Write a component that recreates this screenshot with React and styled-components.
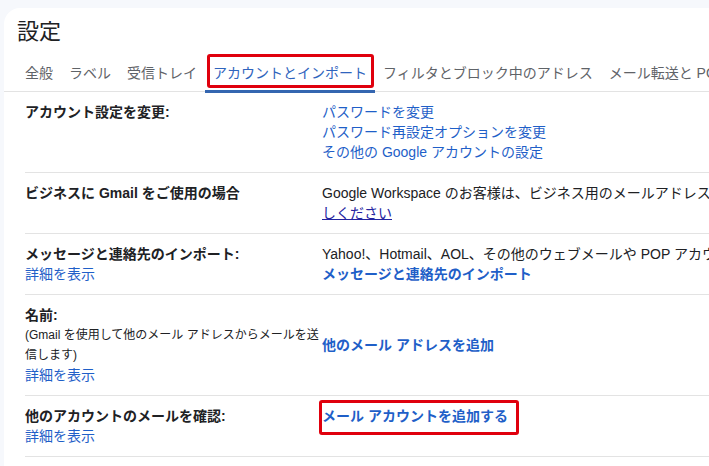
import React from "react";
import styled, { createGlobalStyle } from "styled-components";

const GlobalStyle = createGlobalStyle`
  html, body {
    margin: 0;
    padding: 0;
    overflow: hidden;
    background: #f6f8fc;
  }
  body {
    font-family: "Liberation Sans", "Noto Sans CJK JP", sans-serif;
    color: #202124;
  }
`;

// Fondo gris y panel blanco
const Page = styled.div`
  padding: 8px 0 0 4px;
  height: 466px;
  box-sizing: border-box;
`;

const Panel = styled.div`
  background: #fff;
  border-top-left-radius: 16px;
  height: 100%;
  width: 1100px;
  overflow: hidden;
`;

const Title = styled.h1`
  margin: 0;
  padding: 10px 0 0 13px;
  font-size: 22px;
  font-weight: 400;
  line-height: 28px;
  color: #202124;
`;

// Pestañas
const TabBar = styled.div`
  display: flex;
  margin-top: 9px;
  padding-left: 13px;
  border-bottom: 1px solid #e3e3e3;
  white-space: nowrap;
`;

const Tab = styled.div`
  position: relative;
  height: 36px;
  line-height: 36px;
  padding: 0 8px;
  font-size: 14px;
  color: ${(p) => (p.$active ? "#2f64bd" : "#5f6368")};

  &::after {
    content: "";
    display: ${(p) => (p.$active ? "block" : "none")};
    position: absolute;
    left: 0;
    right: 0;
    bottom: -2px;
    height: 3px;
    background: #3466b0;
  }
`;

const TabHighlight = styled.span`
  position: absolute;
  top: -1px;
  left: 2px;
  right: 1px;
  bottom: 3px;
  border: 3px solid #e0000d;
  border-radius: 3px;
`;

// Filas de configuración
const Rows = styled.div`
  margin-left: 21px;
`;

const Row = styled.div`
  display: flex;
  padding: 10px 0;
  border-bottom: 1px solid #e3e3e3;
  font-size: 14px;
  line-height: 20px;
`;

const Label = styled.div`
  width: 297px;
  flex-shrink: 0;
  display: flex;
  flex-direction: column;
`;

const LabelTitle = styled.span`
  font-weight: 700;
  color: #202124;
`;

const Note = styled.span`
  font-size: 12px;
  line-height: 20px;
  color: #202124;
`;

const Value = styled.div`
  display: flex;
  flex-direction: column;
  align-items: flex-start;
  justify-content: ${(p) => (p.$center ? "center" : "flex-start")};
  white-space: nowrap;
`;

const Link = styled.a`
  color: ${(p) => (p.$visited ? "#2323a0" : "#1f5fc8")};
  font-weight: ${(p) => (p.$bold ? 700 : 400)};
  text-decoration: ${(p) => (p.$underline ? "underline" : "none")};
  cursor: pointer;
`;

const BoxedLink = styled.span`
  display: inline-block;
  margin: -6px 0 0 -3px;
  padding: 3px 8px 6px 0;
  border: 3px solid #e0000d;
  border-radius: 3px;
`;

const tabs = [
  "全般",
  "ラベル",
  "受信トレイ",
  "アカウントとインポート",
  "フィルタとブロック中のアドレス",
  "メール転送と POP/IMAP",
];

export default function App() {
  return (
    <>
      <GlobalStyle />
      <Page>
        <Panel>
          <Title>設定</Title>
          <TabBar>
            {tabs.map((t) => (
              <Tab key={t} $active={t === "アカウントとインポート"}>
                {t}
                {t === "アカウントとインポート" && <TabHighlight />}
              </Tab>
            ))}
          </TabBar>

          <Rows>
            <Row>
              <Label>
                <LabelTitle>アカウント設定を変更:</LabelTitle>
              </Label>
              <Value>
                <Link>パスワードを変更</Link>
                <Link>パスワード再設定オプションを変更</Link>
                <Link>その他の Google アカウントの設定</Link>
              </Value>
            </Row>

            <Row>
              <Label>
                <LabelTitle>ビジネスに Gmail をご使用の場合</LabelTitle>
              </Label>
              <Value>
                <span>
                  Google Workspace のお客様は、ビジネス用のメールアドレス、追加のストレージ、管理ツールをご利用いただけます。
                  <Link $visited $underline>
                    今すぐお試
                  </Link>
                </span>
                <Link $visited $underline>
                  しください
                </Link>
              </Value>
            </Row>

            <Row>
              <Label>
                <LabelTitle>メッセージと連絡先のインポート:</LabelTitle>
                <Link>詳細を表示</Link>
              </Label>
              <Value>
                <span>
                  Yahoo!、Hotmail、AOL、その他のウェブメールや POP アカウントからインポートします。
                </span>
                <Link $bold>メッセージと連絡先のインポート</Link>
              </Value>
            </Row>

            <Row>
              <Label>
                <LabelTitle>名前:</LabelTitle>
                <Note>(Gmail を使用して他のメール アドレスからメールを送信します)</Note>
                <Link>詳細を表示</Link>
              </Label>
              <Value $center>
                <Link $bold>他のメール アドレスを追加</Link>
              </Value>
            </Row>

            <Row>
              <Label>
                <LabelTitle>他のアカウントのメールを確認:</LabelTitle>
                <Link>詳細を表示</Link>
              </Label>
              <Value>
                <BoxedLink>
                  <Link $bold>メール アカウントを追加する</Link>
                </BoxedLink>
              </Value>
            </Row>
          </Rows>
        </Panel>
      </Page>
    </>
  );
}
